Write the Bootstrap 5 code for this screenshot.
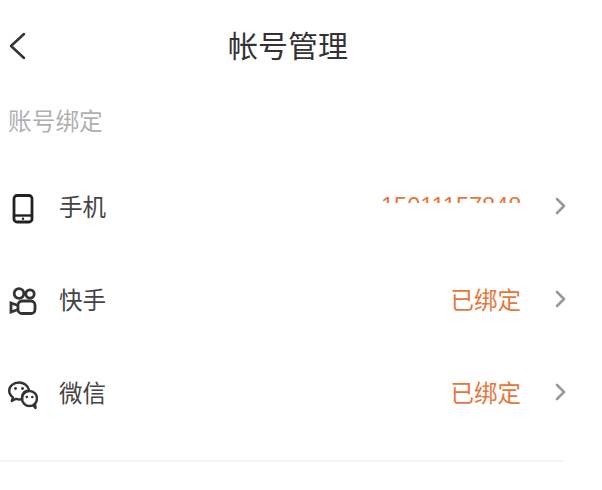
<!DOCTYPE html>
<html lang="zh"><head><meta charset="utf-8">
<link href="https://cdn.jsdelivr.net/npm/bootstrap@5.3.0/dist/css/bootstrap.min.css" rel="stylesheet">
<style>
html,body{height:490px;overflow:hidden}
body{background:#fff;font-family:"Liberation Sans","Noto Sans CJK SC",sans-serif;color:#333}
.app-head{height:52px;margin-top:21px;padding-left:8px}
.app-head svg{flex:none}
.app-title{flex:1;font-size:30px;line-height:52px;text-align:center;color:#333;padding-right:54px;margin:0;font-weight:400}
.sec-label{font-size:23.700px;line-height:32px;color:#b0b0b0;padding-left:8px;margin-top:33px}
.acct-list{margin-top:24px;width:565px;overflow:visible}
.acct-row{height:93px;border:0;padding:0;background:transparent}
.acct-ico{width:30px;margin-left:8px;margin-right:21px;flex:none}
.acct-name{font-size:23.500px;color:#444}
.acct-val{margin-left:auto;font-size:23.500px;color:#e8763a;margin-right:34px}
.clip-num{height:6px;overflow:hidden;line-height:26px;display:block;margin-bottom:18px;margin-right:-3px;width:143px}
.clip-num span{display:block;margin-top:-4px;letter-spacing:0;white-space:nowrap}
.acct-chev{flex:none;margin-bottom:5px;margin-right:-1px}
.acct-rule{border-top:2px solid #f5f5f5;width:565px;margin-top:19px}
</style></head><body>
<div class="app-head d-flex align-items-center">
<svg width="20" height="30" viewBox="0 0 20 30"><path d="M16 2 L3 14 L16 26" fill="none" stroke="#333" stroke-width="2.500" stroke-linecap="round" stroke-linejoin="round"/></svg>
<h1 class="app-title">帐号管理</h1>
</div>
<div class="sec-label">账号绑定</div>
<div class="list-group acct-list">
<div class="list-group-item acct-row d-flex align-items-center">
<svg class="acct-ico" width="30" height="30" viewBox="0 0 30 30"><rect x="6" y="1.500" width="18" height="26.500" rx="3" fill="none" stroke="#222" stroke-width="2.800"/><path d="M6 21.500h18" stroke="#222" stroke-width="2.400"/><circle cx="15" cy="24.800" r="1.200" fill="#222"/></svg>
<span class="acct-name">手机</span>
<span class="acct-val"><span class="clip-num"><span>15011157848</span></span></span>
<svg class="acct-chev" width="11" height="18" viewBox="0 0 11 18"><path d="M2 2l7 7-7 7" fill="none" stroke="#999" stroke-width="2.600" stroke-linecap="round" stroke-linejoin="round"/></svg>
</div>
<div class="list-group-item acct-row d-flex align-items-center">
<svg class="acct-ico" width="30" height="30" viewBox="0 0 30 30"><g fill="none" stroke="#333" stroke-width="2.800"><circle cx="11" cy="6.500" r="4.800"/><circle cx="22" cy="7" r="4.200"/><rect x="10" y="14" width="17" height="12.500" rx="4"/><path d="M10 18.500 L3 16 V25 L10 22.500"/></g></svg>
<span class="acct-name">快手</span>
<span class="acct-val">已绑定</span>
<svg class="acct-chev" width="11" height="18" viewBox="0 0 11 18"><path d="M2 2l7 7-7 7" fill="none" stroke="#999" stroke-width="2.600" stroke-linecap="round" stroke-linejoin="round"/></svg>
</div>
<div class="list-group-item acct-row d-flex align-items-center">
<svg class="acct-ico" width="30" height="30" viewBox="0 0 30 30"><g fill="none" stroke="#333" stroke-width="2.400" stroke-linejoin="round"><path d="M14 17.500c0-4 3-7 7-7.400C20 5.500 15.500 2.500 11 2.500 5.500 2.500 1.200 6.200 1.200 10.800c0 2.700 1.500 5 3.800 6.600L3.800 21l4.300-2.200c1.800.6 4 .8 6 .5z"/><circle cx="21.500" cy="18.500" r="7.500"/><path d="M25 25l2.500 3-.5-4"/></g><g fill="#333"><circle cx="7.500" cy="8.500" r="1.400"/><circle cx="14.500" cy="8.500" r="1.400"/><circle cx="18.800" cy="17" r="1.300"/><circle cx="24.300" cy="17" r="1.300"/></g></svg>
<span class="acct-name">微信</span>
<span class="acct-val">已绑定</span>
<svg class="acct-chev" width="11" height="18" viewBox="0 0 11 18"><path d="M2 2l7 7-7 7" fill="none" stroke="#999" stroke-width="2.600" stroke-linecap="round" stroke-linejoin="round"/></svg>
</div>
</div>
<div class="acct-rule"></div>
<script src="https://cdn.jsdelivr.net/npm/bootstrap@5.3.0/dist/js/bootstrap.bundle.min.js"></script>
</body></html>
